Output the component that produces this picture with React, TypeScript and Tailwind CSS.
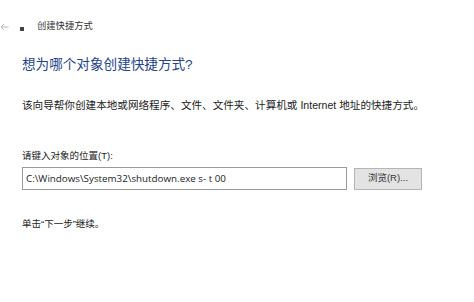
import React from "react";

const font = '"Liberation Sans", "Noto Sans CJK SC", sans-serif';

export default function App() {
  return (
    <div
      className="w-[474px] h-[302px] bg-white text-[#1a1a1a] overflow-hidden flex flex-col"
      style={{ fontFamily: font }}
    >
      {/* title bar */}
      <div className="flex items-center h-[14px] mt-[20px]">
        <svg width="9" height="8" viewBox="0 0 9 8" className="ml-[0px] mr-[10px]">
          <path d="M8.5 4H1M4 1L1 4l3 3" fill="none" stroke="#b8b8b8" strokeWidth="1" />
        </svg>
        <span className="w-[4px] h-[4px] bg-[#444] mt-[4px] ml-[1px] mr-[13px]"></span>
        <span className="text-[9.3px] text-[#333] leading-none">创建快捷方式</span>
      </div>

      <div className="flex flex-col pl-[22px]">
        <div className="mt-[23px] text-[13.6px] leading-[16px] text-[#23448a]">
          想为哪个对象创建快捷方式?
        </div>

        <div className="mt-[26px] text-[10.6px] leading-[12px] text-[#222] whitespace-nowrap">
          该向导帮你创建本地或网络程序、文件、文件夹、计算机或 Internet 地址的快捷方式。
        </div>

        <div className="mt-[39px] text-[9.5px] leading-[12px] text-[#222]">
          请键入对象的位置(T):
        </div>

        <div className="mt-[5px] flex items-center gap-[7px]">
          <div className="w-[325px] h-[23px] border border-[#9a9a9a] bg-white flex items-center pl-[3px]">
            <span
              className="text-[9.8px] leading-none text-[#222] whitespace-nowrap"
              style={{ fontFamily: '"Open Sans", sans-serif' }}
            >
              C:\Windows\System32\shutdown.exe s- t 00
            </span>
          </div>
          <div className="w-[68px] h-[22px] border border-[#b5b5b5] bg-[#e3e3e3] flex items-center justify-center text-[9.5px] text-[#333]">
            浏览(R)...
          </div>
        </div>

        <div className="mt-[28px] text-[9.5px] leading-[12px] text-[#222]">
          单击“下一步”继续。
        </div>
      </div>
    </div>
  );
}
